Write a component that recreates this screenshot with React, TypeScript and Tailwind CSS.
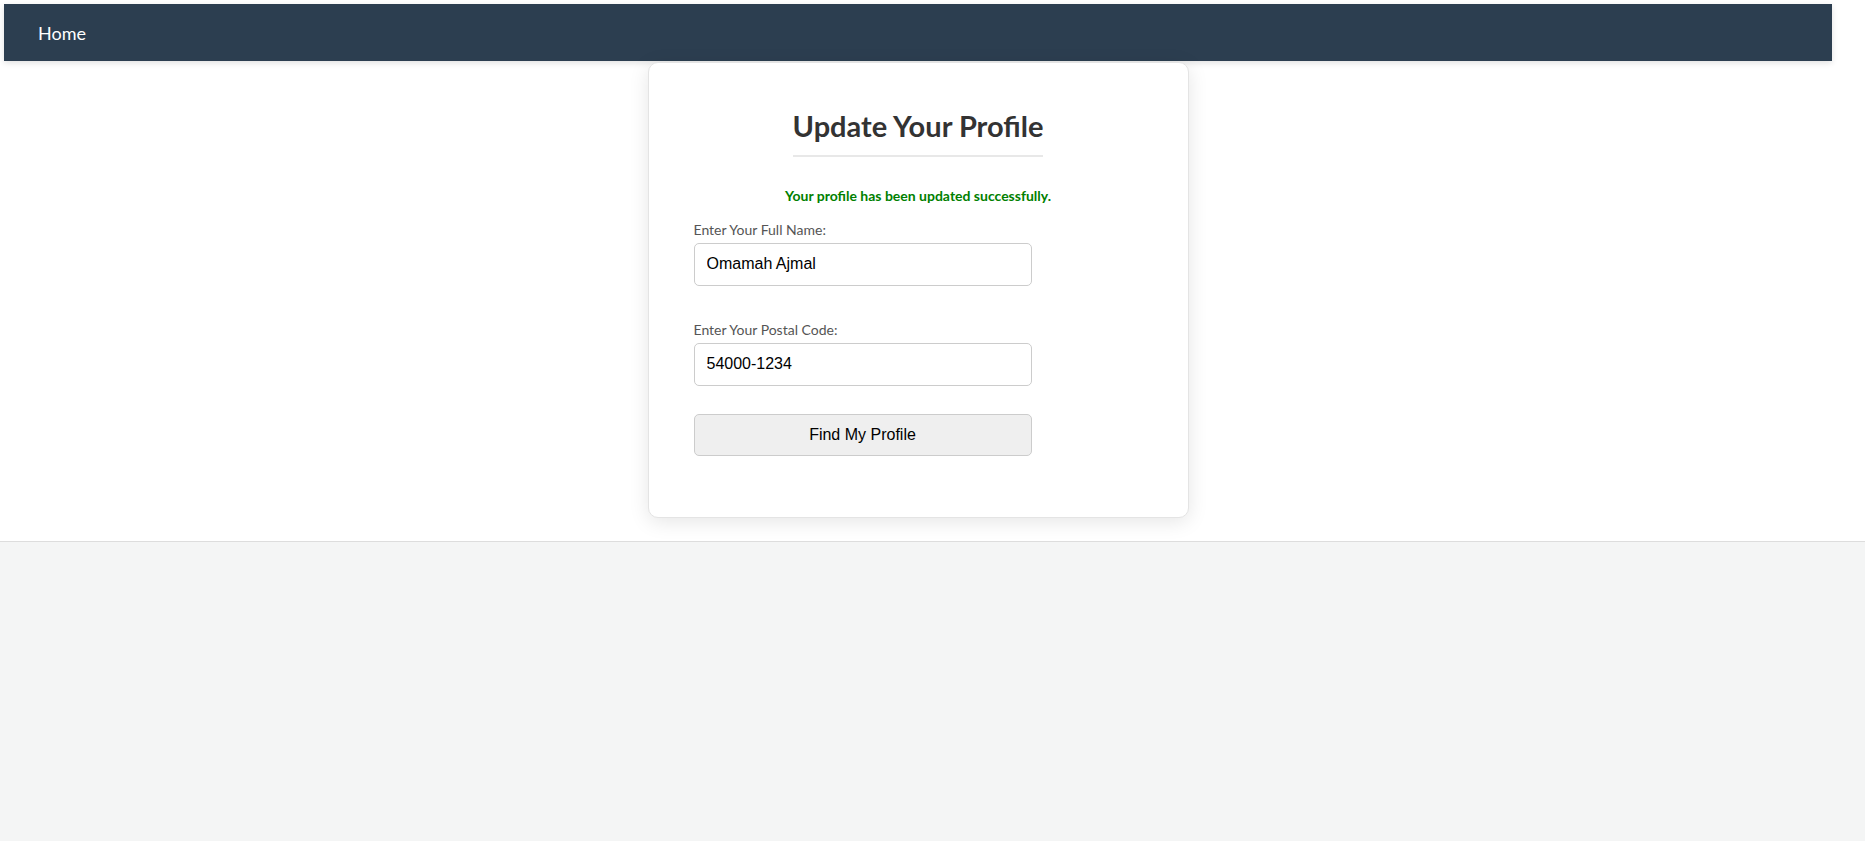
import React from 'react';

const fieldClass =
  "block w-[338px] h-[43px] border border-[#cccccc] rounded-[5px] px-[12px] pb-px text-[16px] text-black bg-white font-['Liberation_Sans',Arial,sans-serif] outline-none";

const App: React.FC = () => {
  return (
    <div className="min-h-screen bg-[#f4f5f5] font-['Lato','Open_Sans',sans-serif]">
      {/* Top white section */}
      <div className="bg-white border-b border-[#dddddd] pt-[4px] pl-[4px] pr-[33px] pb-[23px]">
        <nav className="h-[57px] bg-[#2c3e50] flex items-center pl-[34px] shadow-[0_2px_6px_rgba(0,0,0,0.12)]">
          <a className="text-white text-[18px] leading-none">Home</a>
        </nav>

        <div className="flex justify-center mt-px">
          <div className="w-[541px] bg-white border border-[#e4e4e4] rounded-[10px] shadow-[0_4px_20px_rgba(0,0,0,0.1)] pt-[46px] px-[45px] pb-[61px]">
            <div className="flex justify-center">
              <h2 className="inline-block text-[29px] leading-[34px] font-bold text-[#333333] pb-[12px] border-b-2 border-[#e8e8e8]">
                Update Your Profile
              </h2>
            </div>

            <p className="mt-[31px] text-center text-[14px] leading-[16px] font-bold text-[#008000]">
              Your profile has been updated successfully.
            </p>

            <form>
              <label className="block mt-[18px] mb-[5px] text-[14px] leading-[16px] text-[#555555]">
                Enter Your Full Name:
              </label>
              <input className={fieldClass} value="Omamah Ajmal" readOnly />

              <label className="block mt-[36px] mb-[5px] text-[14px] leading-[16px] text-[#555555]">
                Enter Your Postal Code:
              </label>
              <input className={fieldClass} value="54000-1234" readOnly />

              <button
                type="button"
                className="block mt-[28px] w-[338px] h-[42px] bg-[#efefef] border border-[#cccccc] rounded-[5px] text-[16px] text-black font-['Liberation_Sans',Arial,sans-serif]"
              >
                Find My Profile
              </button>
            </form>
          </div>
        </div>
      </div>
    </div>
  );
};

export default App;
